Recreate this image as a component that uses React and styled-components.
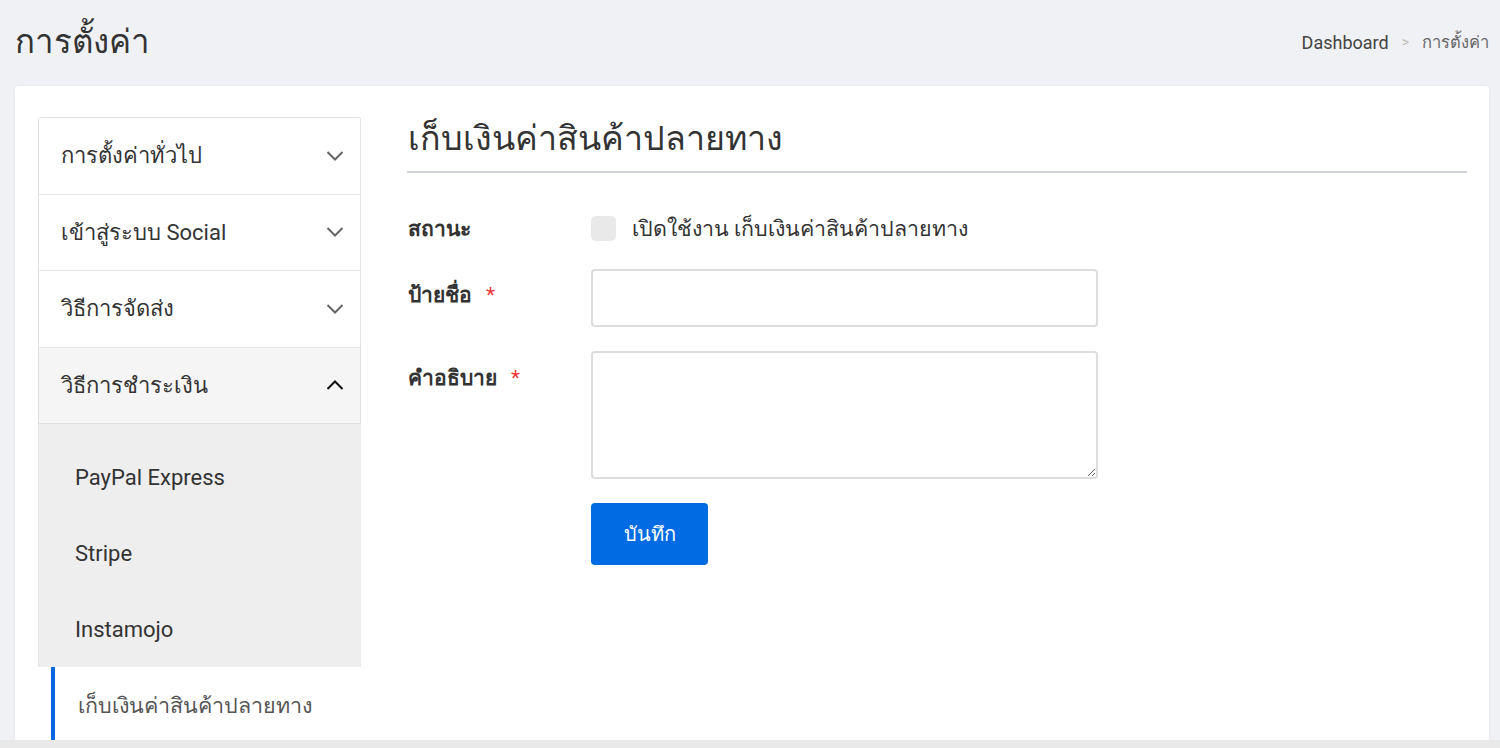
import React from "react"
import styled, { createGlobalStyle } from "styled-components"

const GlobalStyle = createGlobalStyle`
  html, body {
    margin: 0;
    padding: 0;
    height: 100%;
    overflow: hidden;
  }
  body {
    background: #f0f1f5;
    font-family: Roboto, "Noto Sans", "DejaVu Sans", sans-serif;
    color: #333;
  }
  * { box-sizing: border-box; }
`

const menu = [
  { title: "การตั้งค่าทั่วไป" },
  { title: "เข้าสู่ระบบ Social" },
  { title: "วิธีการจัดส่ง" },
  {
    title: "วิธีการชำระเงิน",
    open: true,
    items: ["PayPal Express", "Stripe", "Instamojo"],
  },
]

const Chevron = ({ up }) => (
  <ChevronIcon viewBox="0 0 18 10" $up={up}>
    <path d={up ? "M1.5 9 L9 1.5 L16.5 9" : "M1.5 1 L9 8.5 L16.5 1"} />
  </ChevronIcon>
)

const App = () => (
  <>
    <GlobalStyle />
    <Page>
      <PageHeader>
        <PageTitle>การตั้งค่า</PageTitle>
        <Breadcrumb>
          <Crumb>Dashboard</Crumb>
          <CrumbSep>&gt;</CrumbSep>
          <Crumb $current>การตั้งค่า</Crumb>
        </Breadcrumb>
      </PageHeader>

      <Card>
        <Sidebar>
          <Accordion>
            {menu.map((m) => (
              <React.Fragment key={m.title}>
                <AccordionHeader $open={m.open}>
                  <span>{m.title}</span>
                  <Chevron up={m.open} />
                </AccordionHeader>
                {m.items && (
                  <SubMenu>
                    {m.items.map((i) => (
                      <SubItem key={i}>{i}</SubItem>
                    ))}
                  </SubMenu>
                )}
              </React.Fragment>
            ))}
          </Accordion>
          <ActiveItem>เก็บเงินค่าสินค้าปลายทาง</ActiveItem>
        </Sidebar>

        <Pane>
          <PaneTitle>เก็บเงินค่าสินค้าปลายทาง</PaneTitle>
          <Form>
            <Row $h={33}>
              <Label>สถานะ</Label>
              <CheckLine>
                <CheckBox type="checkbox" />
                <span>เปิดใช้งาน เก็บเงินค่าสินค้าปลายทาง</span>
              </CheckLine>
            </Row>
            <Row $top>
              <Label $pad={11}>
                ป้ายชื่อ<Req>*</Req>
              </Label>
              <Input type="text" />
            </Row>
            <Row $top>
              <Label $pad={12}>
                คำอธิบาย<Req>*</Req>
              </Label>
              <TextArea />
            </Row>
            <Row>
              <Label />
              <SaveButton>บันทึก</SaveButton>
            </Row>
          </Form>
        </Pane>
      </Card>
    </Page>
    <BottomBar />
  </>
)

export default App

const Page = styled.div`
  padding: 0 11px 0 15px;
`

const PageHeader = styled.header`
  display: flex;
  justify-content: space-between;
  align-items: center;
  height: 86px;
  padding-bottom: 2px;
`

const PageTitle = styled.h1`
  margin: 0;
  font-size: 33px;
  line-height: 44px;
  font-weight: 400;
  color: #333;
`

const Breadcrumb = styled.nav`
  display: flex;
  align-items: center;
  gap: 13px;
  font-size: 18px;
`

const Crumb = styled.span`
  color: ${(p) => (p.$current ? "#666" : "#444")};
  font-size: ${(p) => (p.$current ? "16.5px" : "18px")};
`

const CrumbSep = styled.span`
  color: #bbb;
  font-size: 14px;
`

const Card = styled.main`
  display: flex;
  align-items: flex-start;
  gap: 46px;
  background: #fff;
  border-radius: 4px;
  box-shadow: 0 0 3px rgba(0, 0, 0, 0.06);
  padding: 31px 22px 40px 23px;
  min-height: 700px;
`

const Sidebar = styled.aside`
  width: 323px;
  flex-shrink: 0;
`

const Accordion = styled.div`
  border: 1px solid #e3e3e3;
  border-bottom: none;
  border-radius: 3px 3px 0 0;
`

const AccordionHeader = styled.div`
  display: flex;
  align-items: center;
  justify-content: space-between;
  height: 76.5px;
  padding: 0 16px 0 22px;
  font-size: 22px;
  color: #333;
  background: ${(p) => (p.$open ? "#f5f5f5" : "#fff")};
  border-bottom: 1px solid ${(p) => (p.$open ? "#e0e0e0" : "#e6e6e6")};
  box-shadow: ${(p) => (p.$open ? "0 1px 1px rgba(0,0,0,0.05)" : "none")};
`

const ChevronIcon = styled.svg`
  width: 18px;
  height: 10px;
  fill: none;
  stroke: ${(p) => (p.$up ? "#111" : "#666")};
  stroke-width: 2;
`

const SubMenu = styled.div`
  background: #eeeeee;
  padding: 15px 0 0 36px;
  margin-right: -1px;
`

const SubItem = styled.div`
  height: 76px;
  display: flex;
  align-items: center;
  font-size: 22px;
  color: #333;
`

const ActiveItem = styled.div`
  margin-left: 13px;
  height: 76px;
  display: flex;
  align-items: center;
  padding-left: 23px;
  border-left: 4px solid #0a66dd;
  font-size: 21.5px;
  color: #555;
`

const Pane = styled.section`
  flex: 1;
`

const PaneTitle = styled.h2`
  margin: 0;
  padding: 0 0 12px 1px;
  font-size: 34px;
  line-height: 42px;
  font-weight: 400;
  color: #333;
  border-bottom: 2px solid #d1d4dc;
`

const Form = styled.div`
  display: flex;
  flex-direction: column;
  gap: 24px;
  padding-top: 39px;
`

const Row = styled.div`
  display: flex;
  align-items: ${(p) => (p.$top ? "flex-start" : "center")};
  height: ${(p) => (p.$h ? `${p.$h}px` : "auto")};
  line-height: 30px;
`

const Label = styled.label`
  width: 184px;
  flex-shrink: 0;
  padding-left: 1px;
  padding-top: ${(p) => (p.$pad ? `${p.$pad}px` : "0")};
  font-size: 21px;
  font-weight: 700;
  color: #333;
`

const Req = styled.span`
  color: #f0393a;
  font-weight: 400;
  margin-left: 14px;
`

const CheckLine = styled.div`
  display: flex;
  align-items: center;
  gap: 16px;
  font-size: 21.4px;
  color: #333;
`

const CheckBox = styled.input`
  appearance: none;
  margin: 0;
  width: 25px;
  height: 25px;
  border-radius: 5px;
  background: #e9e9e9;
`

const Input = styled.input`
  width: 507px;
  height: 58px;
  border: 2px solid #dddddd;
  border-radius: 4px;
  background: #fff;
  outline: none;
  font-size: 18px;
  padding: 0 14px;
`

const TextArea = styled.textarea`
  width: 507px;
  height: 128px;
  border: 2px solid #dddddd;
  border-radius: 4px;
  outline: none;
  font-size: 18px;
  padding: 10px 14px;
  resize: vertical;
  font-family: inherit;
`

const SaveButton = styled.button`
  width: 117px;
  height: 62px;
  border: none;
  border-radius: 4px;
  background: #006be2;
  color: #fff;
  font-size: 20px;
  font-family: inherit;
  cursor: pointer;
`

const BottomBar = styled.div`
  position: fixed;
  left: 0;
  right: 0;
  bottom: 0;
  height: 8px;
  background: #e9e9e9;
`
